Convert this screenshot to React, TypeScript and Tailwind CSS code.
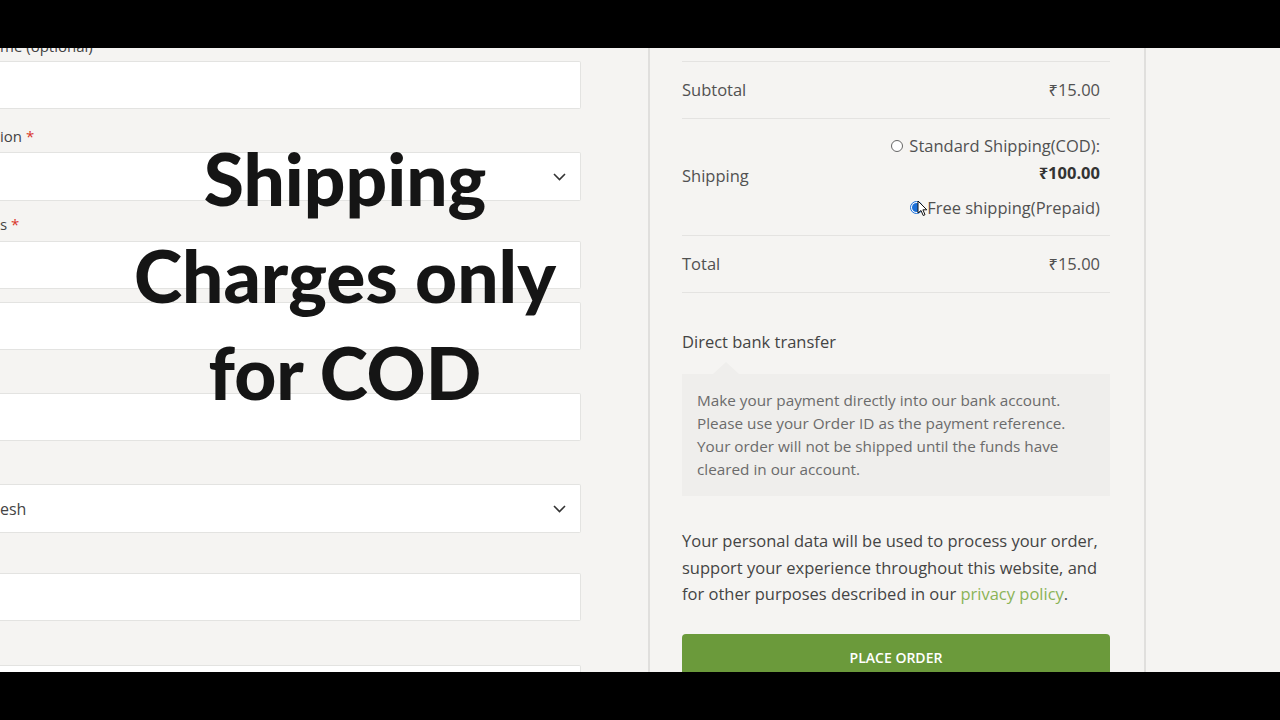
import React from 'react';

const font = { fontFamily: '"Open Sans", "Noto Sans", sans-serif' };

function Chevron() {
  return (
    <svg width="13" height="8" viewBox="0 0 13 8" className="text-[#333]">
      <polyline points="1,1 6.5,6.5 12,1" fill="none" stroke="currentColor" strokeWidth="1.6" />
    </svg>
  );
}

function Field({ className, select, value }: { className?: string; select?: boolean; value?: string }) {
  return (
    <div
      className={`flex shrink-0 items-center justify-between border border-l-0 border-[#e3e3e1] bg-white rounded-r-[2px] pr-[14px] text-[16px] text-[#444] ${select ? 'h-[49px]' : 'h-[48px]'} ${className ?? ''}`}
    >
      <span>{value}</span>
      {select && <Chevron />}
    </div>
  );
}

function Label({ text, required, className }: { text: string; required?: boolean; className?: string }) {
  return (
    <div className={`h-[24px] shrink-0 leading-[24px] text-[15px] text-[#444] ${className ?? ''}`}>
      {text}
      {required && <span className="text-[#d9342b]"> *</span>}
    </div>
  );
}

function Row({ label, value }: { label: string; value: string }) {
  return (
    <div className="flex justify-between border-b border-[#e4e3e1] py-4 pr-[10px] leading-[24px]">
      <span>{label}</span>
      <span>{value}</span>
    </div>
  );
}

function Cursor() {
  return (
    <svg width="11" height="17" viewBox="0 0 11 17" className="absolute left-[917px] top-[152px]">
      <path d="M1 1 L1 13 L4 10.5 L6.2 15.5 L8 14.7 L5.9 9.8 L9.8 9.8 Z" fill="#fff" stroke="#111" strokeWidth="1" strokeLinejoin="round" />
    </svg>
  );
}

export default function App() {
  return (
    <div className="h-[720px] w-[1280px] bg-black flex flex-col overflow-hidden" style={font}>
      <div className="h-[48px] shrink-0 bg-black" />
      <div className="relative h-[624px] shrink-0 bg-[#f5f4f2] overflow-hidden flex">
        {/* billing form, cut off at the left */}
        <div className="w-[581px] shrink-0 flex flex-col">
          <Label text="me (optional)" className="-mt-[14px] mb-[3px]" />
          <Field />
          <Label text="ion" required className="mt-[15px] mb-[4px]" />
          <Field select />
          <Label text="s" required className="mt-[11px] mb-[5px]" />
          <Field />
          <Field className="mt-[13px]" />
          <Field className="mt-[43px]" />
          <Field select value="esh" className="mt-[43px]" />
          <Field className="mt-[40px]" />
          <Field className="mt-[44px]" />
        </div>

        {/* order review */}
        <div className="ml-[67px] w-[498px] shrink-0 border-x-2 border-[#e0dfdd] pl-[32px] pr-[34px] text-[16.5px] text-[#515151]">
          <div className="mt-[13px] border-t border-[#e4e3e1]">
            <Row label="Subtotal" value="₹15.00" />
            <div className="flex items-center justify-between border-b border-[#e4e3e1] pt-[13px] pb-[14px] pr-[10px]">
              <span>Shipping</span>
              <ul className="flex flex-col items-end text-right leading-[27px]">
                <li>
                  <div className="flex items-center gap-[6px]">
                    <span className="inline-block h-[12px] w-[12px] rounded-full border border-[#666] bg-white" />
                    <span>Standard Shipping(COD):</span>
                  </div>
                  <div className="font-bold text-[#333]">₹100.00</div>
                </li>
                <li className="mt-[8px] flex items-center gap-[4px]">
                  <span className="flex h-[13px] w-[13px] items-center justify-center rounded-full border border-[#1a6fd8] bg-white">
                    <span className="h-[9px] w-[9px] rounded-full bg-[#1a6fd8]" />
                  </span>
                  <span>Free shipping(Prepaid)</span>
                </li>
              </ul>
            </div>
            <Row label="Total" value="₹15.00" />
          </div>

          <div className="mt-[37px] leading-[24px] text-[#444]">Direct bank transfer</div>
          <div className="relative mt-[20px] bg-[#efeeec] p-[15px] text-[15.3px] leading-[23px] text-[#6b6b6b]">
            <div className="absolute -top-[12px] left-[31px] h-0 w-0 border-x-[13px] border-b-[12px] border-x-transparent border-b-[#efeeec]" />
            Make your payment directly into our bank account. Please use your Order ID as the payment reference. Your order will not be shipped until the funds have cleared in our account.
          </div>

          <p className="mt-[32px] leading-[26.5px] text-[#444]">
            Your personal data will be used to process your order, support your experience throughout this website, and for other purposes described in our{' '}
            <span className="text-[#8bb356]">privacy policy</span>.
          </p>

          <button className="mt-[26px] h-[48px] w-full rounded-[4px] bg-[#6b9a3b] text-[14px] font-semibold text-white">
            PLACE ORDER
          </button>
        </div>

        {/* caption laid over the form */}
        <div
          className="absolute left-0 top-[82px] w-[690px] text-center text-[73px] font-black leading-[97px] text-[#151515]"
          style={{ fontFamily: 'Lato, "Open Sans", sans-serif' }}
        >
          Shipping
          <br />
          Charges only
          <br />
          for COD
        </div>

        <Cursor />
      </div>
      <div className="h-[48px] shrink-0 bg-black" />
    </div>
  );
}
